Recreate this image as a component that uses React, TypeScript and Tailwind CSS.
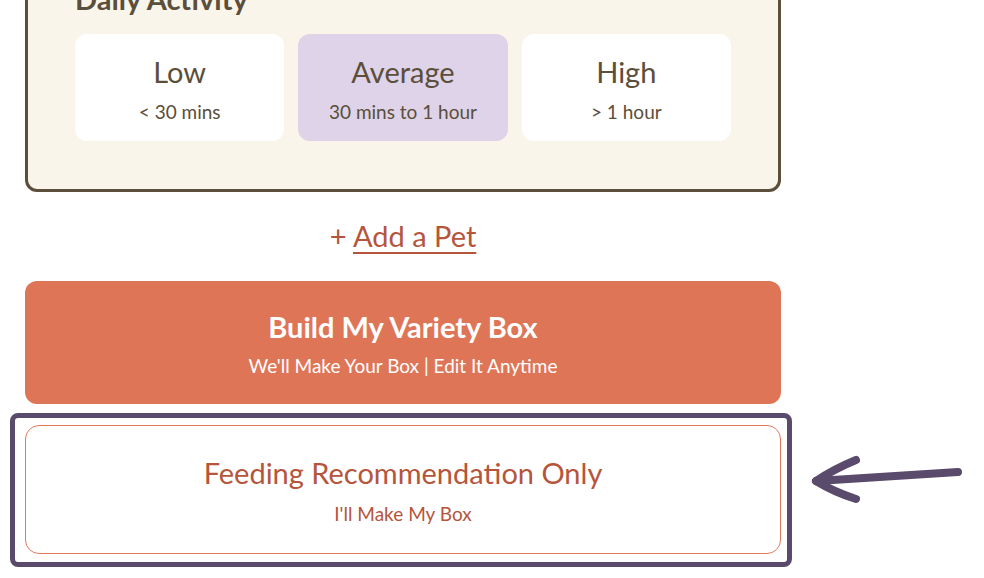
const levels = [
  { name: "Low", detail: "< 30 mins", active: false },
  { name: "Average", detail: "30 mins to 1 hour", active: true },
  { name: "High", detail: "> 1 hour", active: false },
];

function Arrow() {
  return (
    <svg width="160" height="60" viewBox="0 0 160 60" className="ml-[18px] mt-[38px] shrink-0">
      <g fill="none" stroke="#5a4a6b" strokeWidth="8" strokeLinecap="round" strokeLinejoin="round">
        <path d="M7 30 Q 70 26 148 21" />
        <path d="M6 30 Q 24 18 46 9" />
        <path d="M6 30 Q 24 41 46 48" />
      </g>
    </svg>
  );
}

export default function App() {
  return (
    <div className="min-h-screen bg-white overflow-hidden font-['Lato',sans-serif] text-[#5b4e3a]">
      {/* activity card, title scrolled partly off */}
      <div className="ml-[25px] w-[756px] -mt-[41px] rounded-[12px] border-[3px] border-[#5b4e3a] bg-[#f9f5ea] px-[47px] pt-[20px] pb-[48px]">
        <h2 className="text-[29px] leading-[34px] font-bold mb-[18px]">Daily Activity</h2>
        <div className="grid grid-cols-3 gap-[14px]">
          {levels.map((l) => (
            <div
              key={l.name}
              className={`h-[107px] rounded-[12px] pt-[21px] flex flex-col items-center ${l.active ? "bg-[#ded3e8]" : "bg-white"}`}
            >
              <div className="text-[29px] leading-[34px]">{l.name}</div>
              <div className="mt-[11px] text-[19px] leading-[24px]">{l.detail}</div>
            </div>
          ))}
        </div>
      </div>

      <div className="ml-[25px] w-[756px] mt-[27px] text-center text-[29px] leading-[34px] text-[#b5553b]">
        +{" "}
        <span className="underline decoration-2 underline-offset-[5px]">Add a Pet</span>
      </div>

      <button className="ml-[25px] w-[756px] mt-[28px] h-[123px] rounded-[12px] bg-[#df7557] text-white flex flex-col items-center pt-[29px]">
        <span className="text-[29px] leading-[34px] font-bold">Build My Variety Box</span>
        <span className="mt-[10px] text-[19px] leading-[24px]">We'll Make Your Box | Edit It Anytime</span>
      </button>

      <div className="flex items-start pl-[10px] mt-[9px]">
        <div className="w-[782px] shrink-0 rounded-[8px] border-[5px] border-[#5a4a6b] pl-[10px] pr-[6px] pt-[7px] pb-[8px]">
          <button className="w-full h-[129px] rounded-[14px] border-[1.5px] border-[#e07a5a] bg-white text-[#b5553b] flex flex-col items-center pt-[30px]">
            <span className="text-[29px] leading-[34px]">Feeding Recommendation Only</span>
            <span className="mt-[12px] text-[19px] leading-[24px]">I'll Make My Box</span>
          </button>
        </div>
        <Arrow />
      </div>
    </div>
  );
}
